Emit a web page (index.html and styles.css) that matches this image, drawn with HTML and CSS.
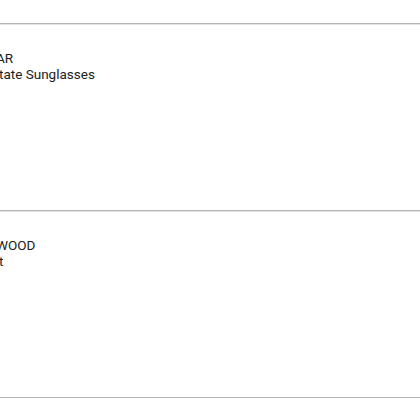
FILE: index.html
```html
<!DOCTYPE html>
<html>
<head>
<meta charset="utf-8">
<link rel="stylesheet" href="styles.css">
</head>
<body>
<ul class="list">
  <li class="item">
    <div class="info">
      <div class="brand brand-1">AR</div>
      <div class="name">tate Sunglasses</div>
    </div>
  </li>
  <li class="item">
    <div class="info">
      <div class="brand brand-2">WOOD</div>
      <div class="name">t</div>
    </div>
  </li>
</ul>
</body>
</html>
```
FILE: styles.css
```css
html, body {
  margin: 0;
  padding: 0;
  background: #ffffff;
  overflow: hidden;
}
body {
  padding-top: 23px;
  font-family: Roboto, "Liberation Sans", sans-serif;
  color: #212121;
}
.list {
  list-style: none;
  margin: 0;
  padding: 0;
  border-bottom: 1px solid #b4b4b4;
  box-shadow: 0 1px 0 #e4e4e4;
}
.item {
  height: 186px;
  border-top: 1px solid #b4b4b4;
  box-shadow: inset 0 1px 0 #e4e4e4;
}
.info {
  padding-top: 26px;
  font-size: 13.5px;
  line-height: 16px;
}
.brand-1 {
  margin-left: -4px;
}
.brand-2 {
  margin-left: -4px;
}
.name {
  margin-left: -1px;
}
```
